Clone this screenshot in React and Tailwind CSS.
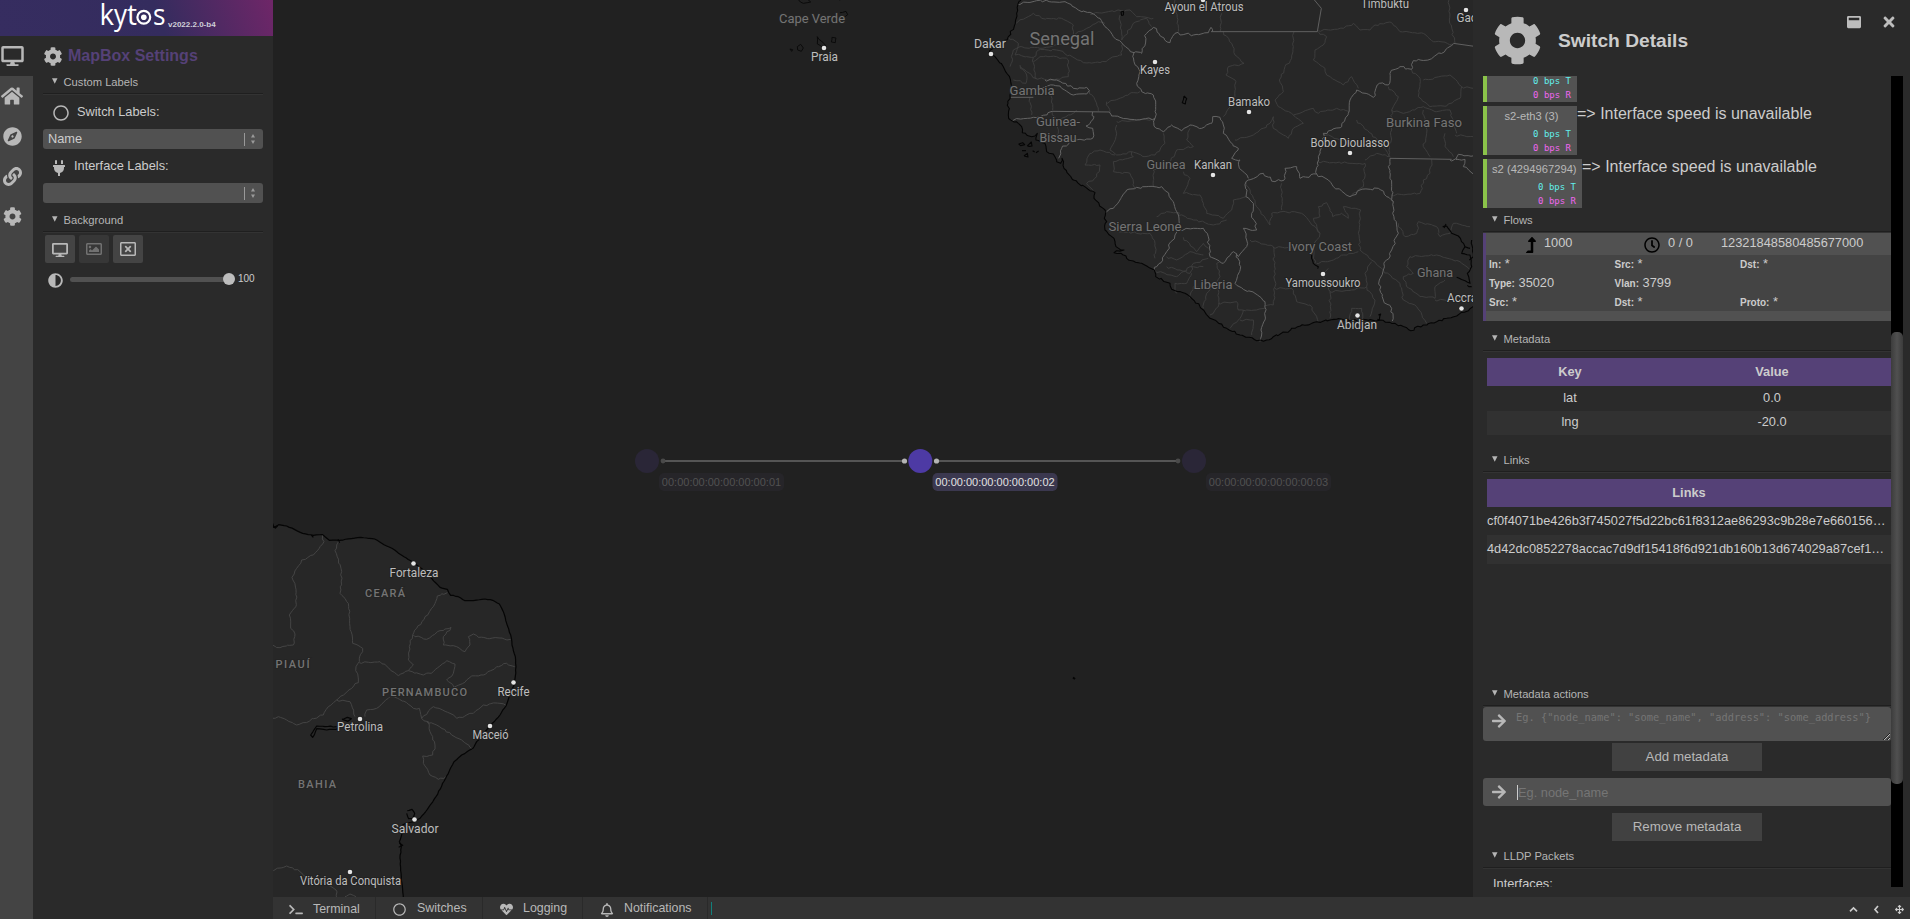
import React from "react";
import {
  FaDesktop, FaHome, FaCompass, FaLink, FaCog, FaRegCircle, FaPlug, FaRegImage, FaRegWindowClose,
  FaAdjust, FaArrowRight, FaTerminal, FaHeartbeat, FaRegBell, FaWindowMaximize, FaTimes,
  FaLevelUpAlt, FaRegClock, FaArrowsAlt,
} from "react-icons/fa";

/* ---------- map geometry ---------- */

// Midpoint displacement gives hand-listed polylines the ragged look of real borders.
function ragged(source, amp = 5) {
  const pts = source.trim().split(/\s+/).map((p) => p.split(",").map(Number));
  let seed = 7;
  const rnd = () => {
    seed = (seed * 16807) % 2147483647;
    return seed / 2147483647 - 0.5;
  };
  let out = `M${pts[0][0]},${pts[0][1]}`;
  for (let i = 1; i < pts.length; i++) {
    const [x0, y0] = pts[i - 1];
    const [x1, y1] = pts[i];
    const len = Math.hypot(x1 - x0, y1 - y0);
    const n = amp ? Math.max(1, Math.round(len / 9)) : 1;
    for (let k = 1; k <= n; k++) {
      const j = k === n ? 0 : amp;
      const x = x0 + ((x1 - x0) * k) / n + rnd() * j;
      const y = y0 + ((y1 - y0) * k) / n + rnd() * j;
      out += `L${x.toFixed(1)},${y.toFixed(1)}`;
    }
  }
  return out;
}

const africaCoast =
  "98,-6 84,12 80,40 76,70 55,110 30,135 8,146 -3,160 15,170 40,200 52,222 62,245 66,262 60,285 54,310 55,345 62,360 85,370 95,380 97,398 110,405 125,410 142,400 138,420 165,430 170,455 190,462 200,485 212,490 216,475 222,505 250,540 300,572 315,578 312,595 345,630 343,655 350,665 345,690 372,715 378,740 402,750 372,758 408,768 410,775 455,790 493,810 497,830 540,850 545,868 585,880 605,895 630,920 660,955 710,985 750,1005 800,1022 820,1024 850,1010 915,985 980,965 1040,958 1100,962 1170,960 1215,970 1262,992 1300,975 1340,965 1370,955 1400,948 1465,915";

const africaBorders = [
  "84,12 140,2 185,6 225,5 265,30 310,42 330,55 345,80 370,110 400,135 432,158 455,160 470,100 490,82 540,128 555,100 610,105 655,98 663,82 668,95",
  "432,158 432,185 450,215 440,250 455,275 490,285 497,320 495,355 440,360 420,358 390,352 365,348 358,336",
  "62,360 100,356 130,352 150,350 186,334",
  "165,240 200,240 250,265 290,262 298,272 290,282 250,285 215,265 190,255 165,262 130,268",
  "308,336 312,350 300,370 288,378 308,385 308,415 270,418 240,425 215,445 206,475",
  "495,355 492,378 520,395 545,375 575,392 600,375 635,385 665,370 668,350 690,352 700,375 700,400 720,425 745,445 725,475 750,480 748,505 775,535",
  "345,636 370,625 410,570 440,562 515,560 550,605 560,635 570,680 555,705 530,755 500,800 493,812",
  "570,690 610,685 640,685 652,700 660,770 700,790 730,755 745,770 770,740 770,720 760,685 800,690 785,640 790,610 768,590 768,545 775,540 820,520 855,545 885,535 885,505 920,500 930,535 980,522",
  "740,760 752,800 735,850 760,868 795,880 825,905 825,960 813,990 810,1024",
  "980,522 985,470 1000,425 1000,400 1055,380 1075,340 1080,300 1100,270 1150,292 1168,250 1195,255 1200,220 1230,200 1265,208 1270,182 1320,178 1390,132",
  "980,522 1015,540 1030,560 1080,590 1110,570 1165,565 1190,590 1210,605 1208,640 1225,700 1205,750 1190,780 1180,810 1168,840 1180,900 1205,925 1207,963",
  "1210,605 1205,560 1195,500 1200,475",
  "1380,480 1425,478 1420,500 1450,522",
  "1400,480 1405,463 1460,470",
];

const africaStraight = ["62,292 130,292", "186,334 358,336", "663,95 982,95 994,25 970,-4", "1200,475 1385,478", "1390,130 1460,140"];

const africaRegions = [
  "76,70 130,40 155,55 215,55 250,75 250,105 230,130 150,145 90,140 70,150 60,200",
  "250,105 290,85 325,65 345,70",
  "55,110 85,130 75,165 130,172 145,150 200,150 255,175 280,188 330,188 395,165 395,135",
  "90,195 110,225 108,250 70,240",
  "130,172 135,235 180,240 235,230 235,180 200,170 150,170 130,185",
  "298,272 315,300 325,334", "348,310 430,278 450,275", "350,305 360,336",
  "120,292 125,345", "182,270 188,330", "140,235 110,215 90,200",
  "390,45 395,120 430,70 470,55 485,80", "300,42 355,35 420,30 440,50 490,55",
  "555,0 565,95", "695,40 690,95", "700,95 725,130 735,165 762,190 715,200 708,225 735,240 735,290 700,350",
  "912,95 905,175 885,200 868,240 880,275 855,300 865,320 910,345 970,325 985,340 1040,325 1078,335",
  "985,95 1010,110 1000,135 975,150 970,180 1005,205 1010,225 1060,255 1085,230 1105,265",
  "985,92 1060,85 1090,70 1110,90 1140,90 1155,75 1205,68 1230,95 1300,100 1330,125 1390,132",
  "1378,-4 1378,60 1395,130", "735,420 790,405 840,370 850,350 850,385 895,415 910,385 940,370 910,345",
  "380,375 378,410 360,450 380,465 425,455 465,470 495,465 525,430 520,400",
  "425,455 430,470 370,485 370,515 420,520 435,565", "300,460 285,495 330,495 320,530 290,550 310,575",
  "300,460 330,450 375,465", "186,334 200,360 250,340 260,330", "200,360 205,400 180,420 165,430",
  "380,365 450,360 495,358", "600,385 590,420 610,440 560,450 530,500 490,510 490,560",
  "580,515 600,535 580,580 630,585 640,610 650,640 700,655 725,630 730,600 768,590",
  "560,640 610,660 670,675 710,660", "500,650 530,635 570,640", "355,690 440,700 480,700 495,730 495,775",
  "580,712 620,755 640,730 655,745", "530,770 560,780 600,755 640,765", "530,800 570,810 600,820 610,790 655,775",
  "495,812 560,830 600,800 640,800", "560,880 555,850 590,850 605,820", "600,895 610,860 660,865 690,830 680,790 690,785",
  "640,925 650,880 665,860", "685,850 685,920 660,945", "685,910 740,905 745,930 800,930 825,925",
  "720,985 750,955 760,930", "750,960 790,960 785,1005", "768,545 800,620 840,675 845,640 905,635 935,640 990,700 970,745 975,790",
  "875,550 875,630", "990,700 970,655 990,650 985,620 1010,608 1028,650 1055,640 1075,655 1060,620 1112,630",
  "1112,630 1105,700 1110,750 1145,780 1180,810", "780,720 850,740 855,860 850,915 825,918",
  "850,742 930,742", "855,865 905,865 920,905 960,915 985,965", "980,790 1030,780 1060,765 1105,755",
  "1015,805 1000,825 1020,875 1020,955", "1020,875 1085,870 1130,860 1125,820 1145,785", "1130,860 1155,900 1140,950",
  "1080,960 1085,925 1115,925 1118,960", "985,485 1080,490 1125,490 1120,560 1080,590",
  "1125,480 1160,460 1200,470", "1000,400 1050,420 1100,440", "1100,360 1180,440 1200,470",
  "1195,260 1225,290 1205,330 1205,390 1195,470", "1205,330 1240,340 1300,320 1340,335 1380,330 1400,400",
  "1265,210 1290,235 1285,290 1320,320 1370,318 1410,295 1415,260 1380,225 1300,240",
  "1300,330 1310,400 1300,440 1320,470", "1365,400 1365,440 1390,470", "1395,405 1450,410",
  "1415,260 1450,265", "1205,585 1290,580 1300,540 1320,520 1325,478", "1225,670 1245,710 1280,700 1285,665 1340,680 1350,710 1380,700 1390,670 1440,680",
  "1180,810 1230,850 1240,900 1280,920 1310,970", "1260,770 1250,800 1270,820 1240,830 1250,860 1290,890 1335,895 1335,860 1365,840",
  "1260,770 1340,765 1410,785 1440,810", "1335,900 1390,900",
];

const africaLakes = [
  "582,288 590,296 586,312 577,308 582,288", "393,36 401,34 400,45 395,46 393,36",
  "965,765 970,790 985,800 983,806", "1358,680 1370,678 1385,700 1405,708 1425,740 1440,745",
  "1362,684 1368,672", "1425,740 1415,760 1440,765 1445,800 1432,820 1440,850 1400,832",
  "1445,720 1450,770 1438,780", "1165,945 1172,942 1168,960 1162,958", "1445,860 1432,856",
  "86,432 98,428 104,434 92,437 86,432", "112,438 124,426 126,438 112,438", "96,452 108,452", "128,452 134,456", "102,468 112,460 114,471 102,468",
  "138,458 146,453",
];

const brazilCoast =
  "4,70 14,82 26,74 50,78 98,100 130,106 158,104 178,121 208,121 272,112 314,117 350,138 374,150 394,165 430,188 462,212 485,235 510,262 532,268 542,286 565,290 585,302 610,302 645,297 668,301 688,312 700,335 710,370 722,405 726,435 736,470 738,500 734,548 722,580 708,618 690,645 662,675 640,700 620,725 608,746 575,765 552,785 530,828 515,858 498,890 472,928 450,955 432,965 412,968 398,975 396,1000 388,1025 394,1040 390,1075 394,1130 400,1195";

const brazilBorders = [
  "158,104 162,125 130,165 95,180 80,205 66,232 78,268 78,320 58,345 62,385 75,402 70,435 30,443 5,434",
  "208,121 195,152 215,215 210,280 235,310 240,380 248,430 278,445 268,485 258,500 265,548 200,600 175,620 160,645 80,675 50,660 25,650 5,655",
  "268,488 330,485 385,527 415,512 460,525 490,515 530,482 555,492 550,520 530,540 552,562 590,540 600,532 640,525 680,500 710,490 734,500",
  "532,278 502,288 490,320 465,350 440,385 428,405 418,440 415,480 430,495 415,512",
  "430,405 470,418 510,392 543,382 520,410 520,435 560,440 585,455 600,435 595,410 610,402 625,412 722,418",
  "200,600 240,605 255,650", "285,650 290,630 320,625 360,590 372,590 410,608 430,625 448,625 455,655 490,620 540,640 560,655 610,640 640,615 690,610 708,616",
  "455,655 475,665 480,695 495,735 488,765 458,768 460,790 480,825 505,838 528,830",
  "470,665 500,675 545,705 575,720 608,748", "5,1112 50,1098 90,1115 105,1130 170,1150 198,1170 200,1195", "225,1190 240,1182 258,1190",
];

const brazilLakes = [
  "200,680 140,678 122,705 128,712 140,686 170,690 205,686", "216,658 232,652 244,656 234,664 216,658",
  "412,932 426,928 434,940 428,955 416,956 410,940", "388,1030 398,1036 386,1042",
  "124,105 130,112", "8,70 16,84 22,78 8,82", "204,118 209,128",
];

const islands = ["176,0 190,10 212,6 200,-4", "300,38 318,34 323,44 312,52 300,48", "232,110 258,138 256,148 232,132 232,110", "276,112 288,114 286,128 274,126 276,112", "172,140 182,133 190,144 184,154 173,150 172,140", "150,147 158,149 155,154 150,147", "298,0 304,-2"];

const cities = [
  ["Ayoun el Atrous", 1204, 11, 79, 1203, 0], ["Timbuktu", 1385, 8, 48], ["Dakar", 990, 48, 32, 991, 54], ["Kayes", 1155, 74, 30, 1155, 62],
  ["Bamako", 1249, 106, 42, 1249, 112], ["Bobo Dioulasso", 1350, 147, 79, 1350, 153], ["Kankan", 1213, 169, 38, 1213, 175],
  ["Yamoussoukro", 1323, 287, 75, 1323, 274], ["Abidjan", 1357, 329, 40, 1357.5, 315.5], ["Accra", 1462, 302, 30, 1461.5, 308.5],
  ["Gao", 1467, 22, 21, 1466, 10], ["Praia", 824.5, 61, 27, 824, 48], ["Fortaleza", 414, 576.5, 49, 413.5, 563.5],
  ["Recife", 513.5, 695.5, 32, 513.5, 682.5], ["Petrolina", 360, 731, 46, 360, 719], ["Maceió", 490.5, 738.5, 36, 490, 726],
  ["Salvador", 415, 832.5, 47, 414.5, 819.5], ["Vitória da Conquista", 350.5, 884.5, 101, 350, 872],
];

const countries = [
  ["Senegal", 1062, 45, 65, 18], ["Gambia", 1032, 95, 45, 13.5], ["Guinea-", 1058, 126, 44, 13.5], ["Bissau", 1058, 142, 37, 13.5],
  ["Guinea", 1166, 169, 39, 13.5], ["Sierra Leone", 1145, 231, 73, 13.5], ["Liberia", 1213, 289, 39, 13.5], ["Ivory Coast", 1320, 251, 64, 13.5],
  ["Burkina Faso", 1424, 127, 76, 13.5], ["Ghana", 1435, 277, 36, 13.5], ["Cape Verde", 812, 23, 66, 13.5],
];

const states = [["CEARÁ", 384, 597, 38], ["PIAUÍ", 291.5, 668, 32], ["PERNAMBUCO", 423.5, 696, 83], ["BAHIA", 316, 788, 36]];

function Lines({ items, amp, ...rest }) {
  return (
    <g fill="none" {...rest}>
      {items.map((d, i) => <path key={i} d={ragged(d, amp)} />)}
    </g>
  );
}

function MapView() {
  return (
    <svg viewBox="273 0 1200 897" className="block h-[897px] w-[1200px]" fontFamily="Roboto, 'Noto Sans', sans-serif" textAnchor="middle">
      <rect x="273" width="1200" height="897" fill="#212121" />
      <g transform="translate(990 0) scale(0.33333)" strokeLinejoin="round">
        <path d={`${ragged(africaCoast, 7)}L1465,-6Z`} fill="#272727" />
        <Lines items={africaRegions} amp={7} stroke="#3e3e3e" strokeWidth="2.8" />
        <Lines items={africaBorders} amp={8} stroke="#646464" strokeWidth="3" />
        <Lines items={africaStraight} amp={0} stroke="#606060" strokeWidth="3" />
        <path d={ragged(africaCoast, 7)} fill="none" stroke="#050505" strokeWidth="3.2" />
        <Lines items={africaLakes} amp={4} stroke="#050505" strokeWidth="3.4" />
      </g>
      <g transform="translate(270 500) scale(0.33333)" strokeLinejoin="round">
        <path d={`${ragged(brazilCoast, 2)}L0,1195L0,70Z`} fill="#272727" />
        <Lines items={brazilBorders} amp={6} stroke="#444444" strokeWidth="3" />
        <path d={ragged(brazilCoast, 2)} fill="none" stroke="#050505" strokeWidth="3.6" />
        <Lines items={brazilLakes} amp={3} stroke="#050505" strokeWidth="3.6" />
      </g>
      <g transform="translate(740 0) scale(0.33333)">
        <Lines items={islands} amp={3} stroke="#0a0a0a" strokeWidth="3" />
      </g>
      <path d="M1073 677.5l2 1.5" stroke="#050505" strokeWidth="2" />
      <g fill="#747474" stroke="#242424" strokeWidth="2" paintOrder="stroke">
        {countries.map(([t, x, y, w, s]) => (
          <text key={t} x={x} y={y} fontSize={s} textLength={w} lengthAdjust="spacingAndGlyphs">{t}</text>
        ))}
        {states.map(([t, x, y, w]) => (
          <text key={t} x={x + 1} y={y} fontSize="11" fontWeight="500" textLength={w + 2} lengthAdjust="spacing">{t}</text>
        ))}
      </g>
      <g fill="#bdbdbd" stroke="#222222" strokeWidth="2" paintOrder="stroke">
        {cities.map(([t, x, y, w, cx, cy]) => (
          <g key={t}>
            <text x={x} y={y} fontSize="12.2" textLength={w} lengthAdjust="spacingAndGlyphs">{t}</text>
            {cx && <circle cx={cx} cy={cy} r="2.3" fill="#e4e4e4" stroke="#181818" strokeWidth="1" />}
          </g>
        ))}
      </g>
      <g>
        <path d="M663 461H904M936 461H1178" stroke="#555555" strokeWidth="2" />
        <circle cx="663" cy="461" r="2.4" fill="#4a4a4a" />
        <circle cx="1178" cy="461" r="2.4" fill="#4a4a4a" />
        <circle cx="904.5" cy="461" r="2.6" fill="#b4b4b4" />
        <circle cx="936.5" cy="461" r="2.6" fill="#b4b4b4" />
        <circle cx="647" cy="461" r="12" fill="#2a2637" />
        <circle cx="920.3" cy="461" r="12" fill="#4d3aa4" />
        <circle cx="1194" cy="461" r="12" fill="#2a2637" />
      </g>
      <g fontFamily="'Liberation Sans', Arial, sans-serif" fontSize="11">
        <rect x="659" y="473" width="125" height="18" rx="5" fill="#262529" />
        <text x="721.5" y="486" fill="#515151">00:00:00:00:00:00:00:01</text>
        <rect x="932.5" y="473" width="125" height="18" rx="5" fill="#3b384f" />
        <text x="995" y="486" fill="#e2e2e2">00:00:00:00:00:00:00:02</text>
        <rect x="1206" y="473" width="125" height="18" rx="5" fill="#262529" />
        <text x="1268.5" y="486" fill="#515151">00:00:00:00:00:00:00:03</text>
      </g>
    </svg>
  );
}

/* ---------- shared pieces ---------- */

function Heading({ children, className = "" }) {
  return (
    <div className={`flex h-[25px] shrink-0 items-center border-b border-[#1f1f1f] pt-[2px] pl-[9px] text-[11.2px] text-[#b5b5b5] shadow-[0_1px_0_#333] ${className}`}>
      <svg viewBox="0 0 6 6" className="mr-[6px] -mt-[2px] h-[6px] w-[5.5px]"><path d="M0 0h6L3 6z" fill="#b5b5b5" /></svg>
      {children}
    </div>
  );
}

function Select({ value }) {
  return (
    <div className="flex h-5 items-center rounded-[3px] bg-[#515151] pl-[5px] text-[12.8px] leading-5 text-[#cccccc]">
      <span className="flex-1">{value}</span>
      <span className="h-[13px] w-px bg-[#999]" />
      <svg viewBox="0 0 4 10" className="mr-[8px] ml-[6px] h-[10px] w-[4px]"><path d="M0 3.5h4L2 0zM0 6.5h4L2 10z" fill="#9a9a9a" /></svg>
    </div>
  );
}

/* ---------- left side ---------- */

function Sidebar() {
  return (
    <aside className="flex h-[919px] w-[273px] shrink-0 flex-col bg-[#2a2a2a]">
      <header className="h-9 bg-[linear-gradient(70deg,#362d60_0%,#342c5e_58%,#6f2668_100%)]">
        <svg viewBox="0 0 273 36" className="h-9 w-[273px] overflow-visible" fontFamily="'Open Sans', 'Noto Sans', sans-serif" fontSize="30" fill="#fff">
          <text x="99.5" y="24.5" textLength="14.5" lengthAdjust="spacingAndGlyphs">k</text>
          <text x="114" y="24.5" textLength="13" lengthAdjust="spacingAndGlyphs">y</text>
          <text x="127" y="24.5" textLength="10" lengthAdjust="spacingAndGlyphs">t</text>
          <circle cx="143.8" cy="17.3" r="6.4" fill="none" stroke="#fff" strokeWidth="2.2" />
          <circle cx="143.8" cy="17.3" r="2.8" />
          <text x="153" y="24.5" textLength="12.5" lengthAdjust="spacingAndGlyphs">s</text>
          <text x="168" y="27" fontSize="8" fontWeight="700" fill="#cfcfd8" fontFamily="'Liberation Sans', Arial, sans-serif">v2022.2.0-b4</text>
        </svg>
      </header>
      <div className="flex flex-1">
        <nav className="flex w-[33px] flex-col bg-[#444444] text-[#b8b8b8]">
          <div className="flex h-10 items-center bg-[#2a2a2a] pl-px"><FaDesktop className="h-5 w-[23px]" /></div>
          <div className="flex h-10 items-center pl-px"><FaHome className="h-[22px] w-[22px]" /></div>
          <div className="flex h-10 items-center pl-[3px]"><FaCompass className="h-[19px] w-[19px]" /></div>
          <div className="flex h-10 items-center pl-[3px]"><FaLink className="h-[19px] w-[19px]" /></div>
          <div className="flex h-10 items-center pl-[3px]"><FaCog className="h-[19px] w-[19px]" /></div>
        </nav>
        <section className="flex w-[220px] flex-col ml-[10px]">
          <div className="flex h-[33px] items-center pt-[6px] text-[16px] leading-[18px] font-bold text-[#554177]">
            <FaCog className="mt-px mr-[5px] h-[19px] w-[20px] text-[#b8b8b8]" />
            MapBox Settings
          </div>
          <Heading>Custom Labels</Heading>
          <div className="flex h-[35px] items-center pl-[10px] text-[12.8px] text-[#cccccc]">
            <FaRegCircle className="mt-[3px] mr-[8px] h-4 w-4 text-[#b8b8b8]" />
            Switch Labels:
          </div>
          <Select value="Name" />
          <div className="flex h-[34px] items-center pl-[10px] text-[12.8px] text-[#cccccc]">
            <FaPlug className="mt-[3px] mr-[9px] h-4 w-3 text-[#b8b8b8]" />
            Interface Labels:
          </div>
          <Select value="" />
          <Heading className="mt-1">Background</Heading>
          <div className="mt-[3px] ml-[2px] flex gap-1 text-[#b8b8b8]">
            <div className="flex h-7 w-[30px] items-center justify-center rounded-[2px] bg-[#444444]"><FaDesktop className="mt-px h-4 w-4" /></div>
            <div className="flex h-7 w-[30px] items-center justify-center rounded-[2px] bg-[#373737] text-[#717171]"><FaRegImage className="h-4 w-4" /></div>
            <div className="flex h-7 w-[30px] items-center justify-center rounded-[2px] bg-[#444444]"><FaRegWindowClose className="h-4 w-4" /></div>
          </div>
          <div className="mt-[8px] flex h-4 items-center pl-[5px]">
            <FaAdjust className="mt-[3px] h-[15px] w-[15px] text-[#b8b8b8]" />
            <div className="ml-[7px] flex h-[5px] w-[160px] items-center rounded-full bg-[#515151]">
              <div className="ml-[153px] h-3 w-3 shrink-0 rounded-full bg-[#bdbdbd]" />
            </div>
            <span className="ml-[8px] -mt-px text-[10px] text-[#cccccc]">100</span>
          </div>
        </section>
      </div>
    </aside>
  );
}

/* ---------- right side ---------- */

function Interface({ name, wide }) {
  return (
    <div className="flex h-[49px] shrink-0 mb-1">
      <div className={`${wide ? "w-[99px] pr-[6px]" : "w-[94px] pr-[6px]"} shrink-0 border-l-4 border-[#8bc34a] bg-[#535353]`}>
        <div className="h-[21px] text-center text-[11.2px] leading-[20px] text-[#b8b8b8] whitespace-nowrap pl-[5px]">{name}</div>
        <div className="text-right font-['DejaVu_Sans_Mono',monospace] text-[9px] leading-[14px] text-[#62efec]">0 bps T</div>
        <div className="text-right font-['DejaVu_Sans_Mono',monospace] text-[9px] leading-[14px] text-[#ef66ef]">0 bps R</div>
      </div>
      <span className="-mt-px text-[16px] leading-[18px] whitespace-nowrap text-[#cccccc]">{"=> Interface speed is unavailable"}</span>
    </div>
  );
}

function Match({ label, value }) {
  return (
    <div className="h-[19px] leading-[18px] whitespace-nowrap">
      {label && <b className="text-[10px]">{label}:</b>} <span className="text-[12.8px]">{value}</span>
    </div>
  );
}

function FlowCard() {
  return (
    <div className="mt-px shrink-0 border-l-[3px] border-[#554177] bg-[#515151] text-[12.8px] text-[#cccccc]">
      <div className="flex h-[22px] items-center pb-[2px] leading-5">
        <div className="flex w-[118px] items-center pl-[38px]"><FaLevelUpAlt className="mt-1 mr-[6px] h-4 w-[14px] text-black" /><span>1000</span></div>
        <div className="flex w-[117px] items-center pl-[40px]"><FaRegClock className="mt-[3px] mr-2 h-4 w-4 text-black" /><span>0 / 0</span></div>
        <span>12321848580485677000</span>
      </div>
      <div className="grid h-14 grid-cols-[125.5px_125.5px_auto] bg-[#444444] pl-[3px]">
        <Match label="In" value="*" /><Match label="Src" value="*" /><Match label="Dst" value="*" />
        <Match label="Type" value="35020" /><Match label="Vlan" value="3799" /><Match />
        <Match label="Src" value="*" /><Match label="Dst" value="*" /><Match label="Proto" value="*" />
      </div>
      <div className="h-[10px]" />
    </div>
  );
}

function ActionButton({ children }) {
  return <button className="mx-auto block h-7 w-[150px] shrink-0 bg-[#414141] text-[13.3px] text-[#b8b8b8]">{children}</button>;
}

function DetailsPanel() {
  return (
    <section className="flex h-[897px] w-[437px] flex-col bg-[#2a2a2a]">
      <header className="flex h-[76px] shrink-0 pl-[20px]">
        <FaCog className="mt-4 h-[49px] w-[49px] text-[#b8b8b8]" />
        <h1 className="ml-[16px] flex-1 pt-[29px] text-[19.2px] leading-6 font-bold text-[#cccccc]">Switch Details</h1>
        <FaWindowMaximize className="mt-[15px] h-[14px] w-[14px] text-[#bdbdbd]" />
        <FaTimes className="mt-[14px] mr-[13px] ml-[20px] h-4 w-4 text-[#bdbdbd]" />
      </header>
      <div className="flex h-[811px] pl-[10px]">
        <div className="flex w-[408px] flex-col overflow-hidden">
          <div className="-mt-[23px] flex shrink-0 flex-col">
            <Interface name="s2-eth2 (2)" />
            <Interface name="s2-eth3 (3)" />
            <Interface name="s2 (4294967294)" wide />
          </div>
          <Heading className="-mt-[5px]">Flows</Heading>
          <FlowCard />
          <Heading className="mt-[5px]">Metadata</Heading>
          <div className="mt-[7px] ml-1 grid shrink-0 grid-cols-[166px_238px] text-center text-[12.8px] text-[#cccccc]">
            <div className="h-7 bg-[#554177] leading-[27px] font-bold">Key</div>
            <div className="h-7 bg-[#554177] leading-[27px] font-bold">Value</div>
            <div className="h-[25px] leading-[23px]">lat</div>
            <div className="h-[25px] leading-[23px]">0.0</div>
            <div className="h-6 bg-[#313131] leading-[21px]">lng</div>
            <div className="h-6 bg-[#313131] leading-[21px]">-20.0</div>
          </div>
          <Heading className="mt-[12px]">Links</Heading>
          <div className="mt-[7px] ml-1 h-[85px] shrink-0 text-[12.8px] whitespace-nowrap text-[#cccccc]">
            <div className="h-7 bg-[#554177] text-center leading-7 font-bold">Links</div>
            <div className="h-7 leading-7">cf0f4071be426b3f745027f5d22bc61f8312ae86293c9b28e7e660156…</div>
            <div className="h-[29px] bg-[#313131] leading-7">4d42dc0852278accac7d9df15418f6d921db160b13d674029a87cef1…</div>
          </div>
          <Heading className="mt-[117px]">Metadata actions</Heading>
          <div className="mt-px flex h-[34px] shrink-0 rounded-[3px] bg-[#515151]">
            <FaArrowRight className="mt-[6px] ml-[8px] h-4 w-4 text-[#b8b8b8]" />
            <textarea
              placeholder={'Eg. {"node_name": "some_name", "address": "some_address"}'}
              className="ml-[9px] h-[34px] w-[375px] resize overflow-hidden pt-[4px] font-['DejaVu_Sans_Mono',monospace] text-[10.35px] leading-[13px] placeholder:text-[#757575]"
            />
          </div>
          <div className="mt-[2px] shrink-0"><ActionButton>Add metadata</ActionButton></div>
          <div className="mt-[7px] flex h-7 shrink-0 items-center rounded-[3px] bg-[#515151]">
            <FaArrowRight className="ml-[8px] h-4 w-4 text-[#b8b8b8]" />
            <span className="ml-[10px] h-[15px] w-px bg-[#cccccc]" />
            <input placeholder="Eg. node_name" className="h-7 flex-1 pt-px text-[12.8px] placeholder:text-[#757575]" />
          </div>
          <div className="mt-[7px] shrink-0"><ActionButton>Remove metadata</ActionButton></div>
          <Heading className="mt-[2px]">LLDP Packets</Heading>
          <div className="mt-[8px] ml-[10px] shrink-0 text-[12.8px] leading-[15px] text-[#cccccc]">Interfaces:</div>
        </div>
        <div className="w-3 bg-black pt-[256px]">
          <div className="h-[452px] rounded-[5px] bg-[linear-gradient(90deg,#3c3c3c,#505050_50%,#3c3c3c)]" />
        </div>
      </div>
    </section>
  );
}

/* ---------- bottom bar ---------- */

function StatusBar() {
  const item = "flex h-[22px] items-center border-r border-[#2a2a2a] text-[12.4px] leading-[22px] text-[#b8b8b8]";
  return (
    <footer className="flex h-[22px] items-center bg-[#333333]">
      <div className={`${item} w-[103px] pl-4`}><FaTerminal className="mt-[3px] mr-[10px] h-[11px] w-[14px]" /><span className="pt-[2px]">Terminal</span></div>
      <div className={`${item} w-[107px] pl-[17px]`}><FaRegCircle className="mt-[2px] mr-[11px] h-[13px] w-[13px]" />Switches</div>
      <div className={`${item} w-[100px] pl-[17px]`}><FaHeartbeat className="mt-[2px] mr-[10px] h-[13px] w-[13px]" />Logging</div>
      <div className={`${item} w-[125px] pl-[17px]`}><FaRegBell className="mt-[3px] mr-[10px] h-[14px] w-[14px]" />Notifications</div>
      <span className="ml-[3px] h-[13px] w-px bg-[#12807c]" />
      <div className="ml-auto flex items-center gap-[14px] pt-[3px] pr-[6px] text-[#cccccc]">
        <svg viewBox="0 0 9 9" className="h-[9px] w-[9px]" fill="none" stroke="currentColor" strokeWidth="1.7"><path d="M1 6.3L4.5 3L8 6.3" /></svg>
        <svg viewBox="0 0 9 9" className="h-[9px] w-[9px]" fill="none" stroke="currentColor" strokeWidth="1.7"><path d="M6 1L3 4.5L6 8" /></svg>
        <FaArrowsAlt className="h-[9px] w-[9px]" />
      </div>
    </footer>
  );
}

export default function App() {
  return (
    <div className="flex h-[919px] w-[1910px] overflow-hidden bg-[#2a2a2a] font-['Liberation_Sans',Arial,sans-serif]">
      <Sidebar />
      <div className="flex w-[1637px] flex-col">
        <main className="flex h-[897px]">
          <MapView />
          <DetailsPanel />
        </main>
        <StatusBar />
      </div>
    </div>
  );
}
